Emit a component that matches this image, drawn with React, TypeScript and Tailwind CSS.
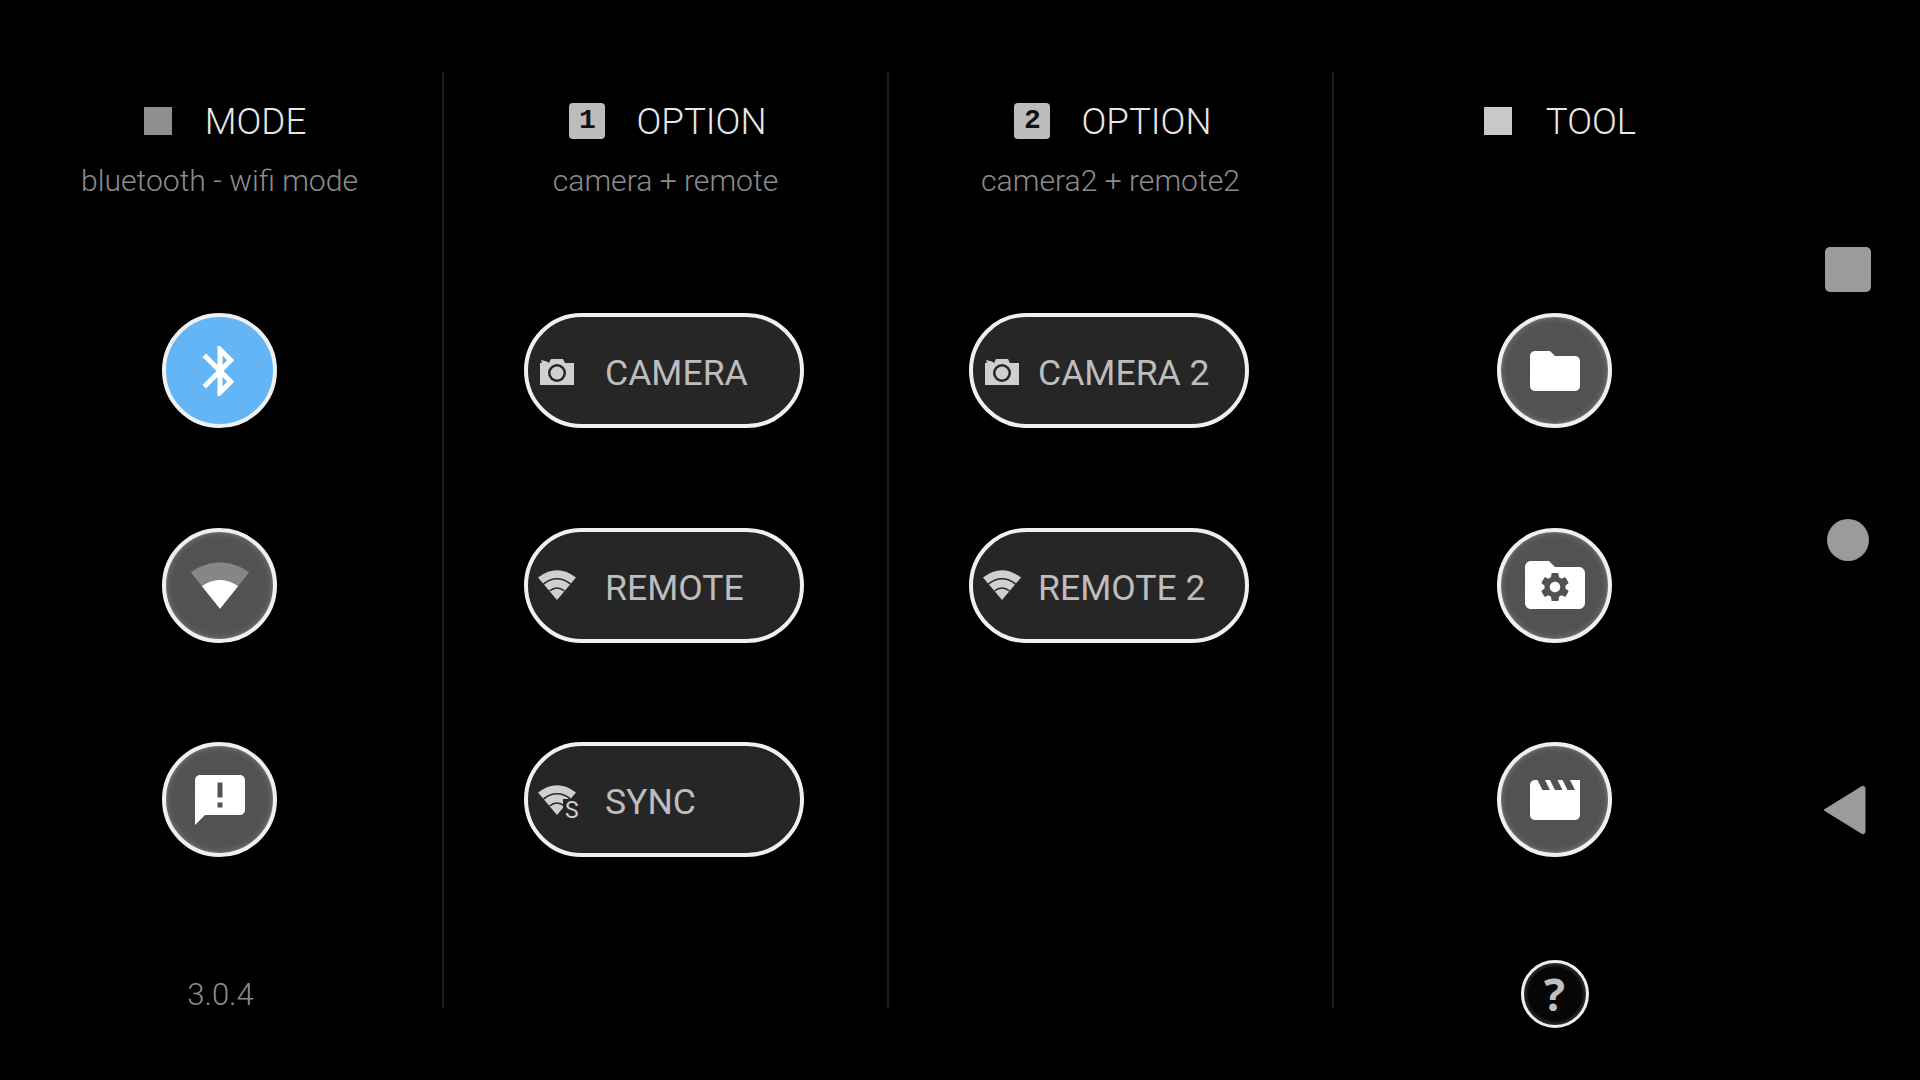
import { ReactNode } from "react";

const roboto = "font-['Roboto','Liberation_Sans',sans-serif]";

function RoundButton({ active, children }: { active?: boolean; children: ReactNode }) {
  return (
    <div
      className={
        "flex h-[115px] w-[115px] items-center justify-center rounded-full border-[4px] border-[#f0f0f0] " +
        (active
          ? "bg-[#64b5f6]"
          : "bg-[radial-gradient(circle,#525252_0%,#525252_62%,#5c5c5c_68%,#777777_71%)]")
      }
    >
      {children}
    </div>
  );
}

function Icon({ size = 60, children }: { size?: number; children: ReactNode }) {
  return (
    <svg width={size} height={size} viewBox="0 0 24 24" fill="#fff">
      {children}
    </svg>
  );
}

function CameraIcon() {
  return (
    <svg width="34" height="27" viewBox="0 0 34 27" className="mt-[1px] shrink-0">
      <path d="M0 5 L2 5 L1 2 L7 3.5 L9 5 L11 1 L23 1 L25 5 L34 5 L34 27 L0 27 Z" fill="#cfcfcf" />
      <circle cx="17" cy="15" r="9" fill="#262626" />
      <circle cx="17" cy="15" r="6.5" fill="#cfcfcf" />
    </svg>
  );
}

function WifiIcon() {
  return (
    <svg width="38" height="30" viewBox="0 0 38 30" className="shrink-0">
      <path d="M19 30 L0 7.5 Q19 -7 38 7.5 Z" fill="#cfcfcf" />
      <path d="M5.5 14 Q19 3.5 32.5 14" stroke="#262626" strokeWidth="1.6" fill="none" />
      <path d="M11.5 21 Q19 15 26.5 21" stroke="#262626" strokeWidth="1.6" fill="none" />
    </svg>
  );
}

function SyncIcon() {
  return (
    <div className="relative h-[30px] w-[38px] shrink-0">
      <WifiIcon />
      <span className={`absolute left-[25px] top-[14px] bg-[#262626] pl-[2px] text-[23px] leading-[23px] text-[#cfcfcf] ${roboto}`}>
        S
      </span>
    </div>
  );
}

function Pill({ icon, label, gap }: { icon: ReactNode; label: string; gap: string }) {
  return (
    <div className="flex h-[115px] w-[280px] items-center rounded-full border-[4px] border-[#f0f0f0] bg-[#262626] pl-[10px]">
      <div className="flex w-[38px] justify-center">{icon}</div>
      <span className={`${gap} pt-[5px] text-[35.6px] leading-[40px] text-[#bdbdbd] ${roboto}`}>{label}</span>
    </div>
  );
}

function Header({ mark, title, sub, shift }: { mark: ReactNode; title: string; sub?: string; shift: string }) {
  return (
    <div className="flex h-[216px] flex-col items-center">
      <div className={`flex h-[48px] items-center ${shift}`}>
        {mark}
        <span className={`pt-[1px] text-[36.7px] font-light leading-[48px] text-[#e6e6e6] ${roboto}`}>{title}</span>
      </div>
      {sub && <div className={`mt-[18px] text-[30.1px] font-light leading-[36px] text-[#8c8c8c] ${roboto}`}>{sub}</div>}
    </div>
  );
}

function NumberMark({ n }: { n: string }) {
  return (
    <div className="mr-[31px] flex h-[36px] w-[36px] items-center justify-center rounded-[4px] bg-[#bcbcbc]">
      <span className="font-['Liberation_Mono',monospace] text-[28px] font-bold leading-[28px] text-[#111]">{n}</span>
    </div>
  );
}

function Divider() {
  return <div className="my-[72px] w-[2px] shrink-0 bg-[#1e1e1e]" />;
}

export default function App() {
  return (
    <div className="flex h-screen w-[1920px] overflow-hidden bg-black">
      {/* mode */}
      <div className="flex w-[442px] flex-col items-center pb-[51px] pr-[3px] pt-[97px]">
        <div className="w-full">
          <Header
            mark={<div className="mr-[33px] h-[28px] w-[28px] bg-[#8f8f8f]" />}
            title="MODE"
            sub="bluetooth - wifi mode"
            shift="pl-[11px]"
          />
        </div>
        <div className="flex flex-col gap-[99.5px]">
          <RoundButton active>
            <Icon>
              <path d="M17.71 7.71L12 2h-1v7.59L6.41 5 5 6.41 10.59 12 5 17.59 6.41 19 11 14.41V22h1l5.71-5.71-4.3-4.29 4.3-4.29zM13 5.83l1.88 1.88L13 9.59V5.83zm1.88 10.46L13 18.17v-3.76l1.88 1.88z" />
            </Icon>
          </RoundButton>
          <RoundButton>
            <Icon>
              <path fillOpacity=".3" d="M12.01 21.49L23.64 7c-.45-.34-4.93-4-11.64-4C5.28 3 .81 6.66.36 7l11.64 14.49.01.01.01-.01z" />
              <path d="M4.79 12.52l7.2 8.98H12l.01-.01 7.2-8.98C18.85 12.24 16.1 10 12 10s-6.85 2.24-7.21 2.52z" />
            </Icon>
          </RoundButton>
          <RoundButton>
            <Icon>
              <path d="M20 2H4c-1.1 0-1.99.9-1.99 2L2 22l4-4h14c1.1 0 2-.9 2-2V4c0-1.1-.9-2-2-2zm-7 9h-2V5h2v6zm0 4h-2v-2h2v2z" />
            </Icon>
          </RoundButton>
        </div>
        <div className={`ml-[2px] mt-auto flex h-[68px] items-center text-[31px] font-light text-[#8c8c8c] ${roboto}`}>3.0.4</div>
      </div>
      <Divider />

      {/* option 1 */}
      <div className="flex w-[443px] flex-col items-center pt-[97px]">
        <div className="w-full">
          <Header mark={<NumberMark n="1" />} title="OPTION" sub="camera + remote" shift="pl-[5px]" />
        </div>
        <div className="mr-[3px] flex flex-col gap-[99.5px]">
          <Pill icon={<CameraIcon />} label="CAMERA" gap="ml-[29px]" />
          <Pill icon={<WifiIcon />} label="REMOTE" gap="ml-[29px]" />
          <Pill icon={<SyncIcon />} label="SYNC" gap="ml-[29px]" />
        </div>
      </div>
      <Divider />

      {/* option 2 */}
      <div className="flex w-[443px] flex-col items-center pt-[97px]">
        <div className="w-full">
          <Header mark={<NumberMark n="2" />} title="OPTION" sub="camera2 + remote2" shift="pl-[5px]" />
        </div>
        <div className="mr-[3px] flex flex-col gap-[99.5px]">
          <Pill icon={<CameraIcon />} label="CAMERA 2" gap="ml-[17px]" />
          <Pill icon={<WifiIcon />} label="REMOTE 2" gap="ml-[17px]" />
        </div>
      </div>
      <Divider />

      {/* tool */}
      <div className="flex w-[445px] flex-col items-center pb-[52px] pt-[97px]">
        <div className="w-full">
          <Header mark={<div className="mr-[34px] h-[28px] w-[28px] bg-[#c8c8c8]" />} title="TOOL" shift="pl-[7px]" />
        </div>
        <div className="mr-[4px] flex flex-col gap-[99.5px]">
          <RoundButton>
            <Icon>
              <path d="M10 4H4c-1.1 0-1.99.9-1.99 2L2 18c0 1.1.9 2 2 2h16c1.1 0 2-.9 2-2V8c0-1.1-.9-2-2-2h-8l-2-2z" />
            </Icon>
          </RoundButton>
          <RoundButton>
            <Icon size={72}>
              <path d="M10 4H4c-1.1 0-1.99.9-1.99 2L2 18c0 1.1.9 2 2 2h16c1.1 0 2-.9 2-2V8c0-1.1-.9-2-2-2h-8l-2-2z" />
              <g transform="translate(12 12.67) scale(.485) translate(-12 -12)">
                <path
                  fill="#525252"
                  d="M19.14,12.94c0.04-0.3,0.06-0.61,0.06-0.94c0-0.32-0.02-0.64-0.07-0.94l2.03-1.58c0.18-0.14,0.23-0.41,0.12-0.61 l-1.92-3.32c-0.12-0.22-0.37-0.29-0.59-0.22l-2.39,0.96c-0.5-0.38-1.03-0.7-1.62-0.94L14.4,2.81c-0.04-0.24-0.24-0.41-0.48-0.41 h-3.84c-0.24,0-0.43,0.17-0.47,0.41L9.25,5.35C8.66,5.59,8.12,5.92,7.63,6.29L5.24,5.33c-0.22-0.08-0.47,0-0.59,0.22L2.74,8.87 C2.62,9.08,2.66,9.34,2.86,9.48l2.03,1.58C4.84,11.36,4.8,11.69,4.8,12s0.02,0.64,0.07,0.94l-2.03,1.58 c-0.18,0.14-0.23,0.41-0.12,0.61l1.92,3.32c0.12,0.22,0.37,0.29,0.59,0.22l2.39-0.96c0.5,0.38,1.03,0.7,1.62,0.94l0.36,2.54 c0.05,0.24,0.24,0.41,0.48,0.41h3.84c0.24,0,0.44-0.17,0.47-0.41l0.36-2.54c0.59-0.24,1.13-0.56,1.62-0.94l2.39,0.96 c0.22,0.08,0.47,0,0.59-0.22l1.92-3.32c0.12-0.22,0.07-0.47-0.12-0.61L19.14,12.94z M12,15.6c-1.98,0-3.6-1.62-3.6-3.6 s1.62-3.6,3.6-3.6s3.6,1.62,3.6,3.6S13.98,15.6,12,15.6z"
                />
              </g>
            </Icon>
          </RoundButton>
          <RoundButton>
            <Icon>
              <path d="M18 4l2 4h-3l-2-4h-2l2 4h-3l-2-4H8l2 4H7L5 4H4c-1.1 0-1.99.9-1.99 2L2 18c0 1.1.9 2 2 2h16c1.1 0 2-.9 2-2V4h-4z" />
            </Icon>
          </RoundButton>
        </div>
        <div className="mr-[4px] mt-auto flex h-[68px] w-[68px] items-center justify-center rounded-full border-[3px] border-[#f0f0f0] bg-[radial-gradient(circle,#060606_0%,#060606_60%,#303030_71%)]">
          <span className="font-['Open_Sans',sans-serif] text-[44px] font-bold leading-[44px] text-[#c0c0c0]">?</span>
        </div>
      </div>

      {/* system nav */}
      <div className="flex flex-1 flex-col items-center pr-[3px] pt-[247px]">
        <div className="h-[45px] w-[46px] rounded-[5px] bg-[#9b9b9b]" />
        <div className="mt-[227px] h-[42px] w-[42px] rounded-full bg-[#9b9b9b]" />
        <svg width="44" height="50" viewBox="0 0 44 50" className="mt-[224px] -ml-[9px]">
          <path d="M2 25 L40 1.5 Q43 0.5 43 4 L43 46 Q43 49.5 40 48.5 Z" fill="#9b9b9b" stroke="#9b9b9b" strokeWidth="1" strokeLinejoin="round" />
        </svg>
      </div>
    </div>
  );
}
